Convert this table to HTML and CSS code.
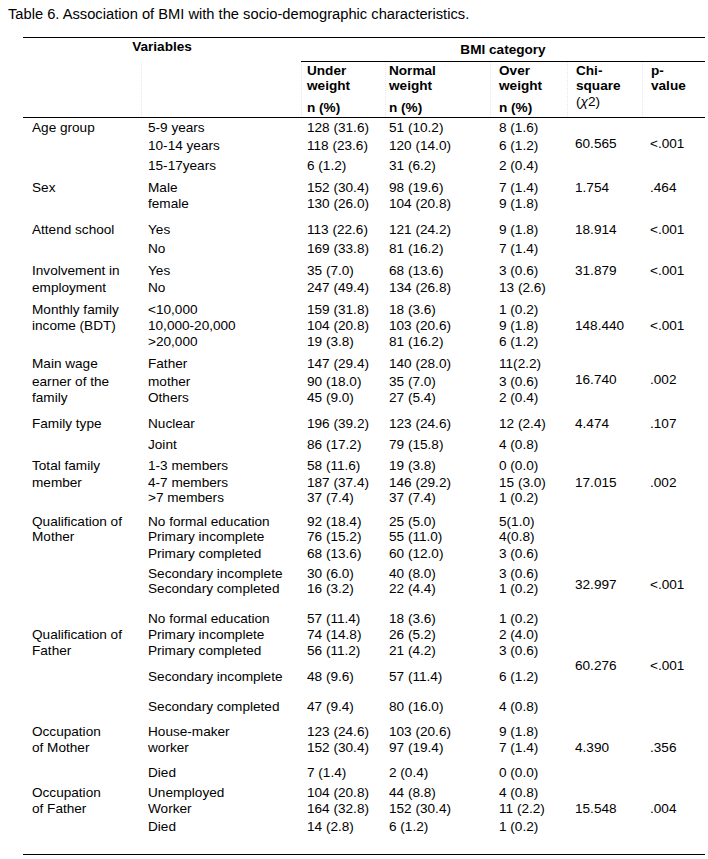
FILE: index.html
```html
<!DOCTYPE html>
<html>
<head>
<meta charset="utf-8">
<link rel="stylesheet" href="styles.css">
</head>
<body>
<div class="page">
  <p class="title">Table 6. Association of BMI with the socio-demographic characteristics.</p>
  <div class="table">
    <div class="head">
      <div class="h-var">Variables</div>
      <div class="h-bmi">BMI category</div>
      <div class="hc"></div>
      <div class="hc"></div>
      <div class="hc"><div>Under</div><div>weight</div><div class="np">n (%)</div></div>
      <div class="hc"><div>Normal</div><div>weight</div><div class="np">n (%)</div></div>
      <div class="hc"><div>Over</div><div>weight</div><div class="np">n (%)</div></div>
      <div class="hc"><div>Chi-</div><div>square</div><div class="chi">(<i>χ</i>2)</div></div>
      <div class="hc"><div>p-</div><div>value</div></div>
    </div>
    <div class="body">
      <div class="ln"><span>Age group</span><span>5-9 years</span><span>128 (31.6)</span><span>51 (10.2)</span><span>8 (1.6)</span><span></span><span></span></div>
      <div class="ln m3"><span></span><span>10-14 years</span><span>118 (23.6)</span><span>120 (14.0)</span><span>6 (1.2)</span><span class="up2">60.565</span><span class="up2">&lt;.001</span></div>
      <div class="ln m5"><span></span><span>15-17years</span><span>6 (1.2)</span><span>31 (6.2)</span><span>2 (0.4)</span><span></span><span></span></div>
      <div class="ln m7"><span>Sex</span><span>Male</span><span>152 (30.4)</span><span>98 (19.6)</span><span>7 (1.4)</span><span>1.754</span><span>.464</span></div>
      <div class="ln m1"><span></span><span>female</span><span>130 (26.0)</span><span>104 (20.8)</span><span>9 (1.8)</span><span></span><span></span></div>
      <div class="ln m11"><span>Attend school</span><span>Yes</span><span>113 (22.6)</span><span>121 (24.2)</span><span>9 (1.8)</span><span>18.914</span><span>&lt;.001</span></div>
      <div class="ln m4"><span></span><span>No</span><span>169 (33.8)</span><span>81 (16.2)</span><span>7 (1.4)</span><span></span><span></span></div>
      <div class="ln m7"><span>Involvement in</span><span>Yes</span><span>35 (7.0)</span><span>68 (13.6)</span><span>3 (0.6)</span><span>31.879</span><span>&lt;.001</span></div>
      <div class="ln m2"><span>employment</span><span>No</span><span>247 (49.4)</span><span>134 (26.8)</span><span>13 (2.6)</span><span></span><span></span></div>
      <div class="ln m7"><span>Monthly family</span><span>&lt;10,000</span><span>159 (31.8)</span><span>18 (3.6)</span><span>1 (0.2)</span><span></span><span></span></div>
      <div class="ln m1"><span>income (BDT)</span><span>10,000-20,000</span><span>104 (20.8)</span><span>103 (20.6)</span><span>9 (1.8)</span><span>148.440</span><span>&lt;.001</span></div>
      <div class="ln m1"><span></span><span>&gt;20,000</span><span>19 (3.8)</span><span>81 (16.2)</span><span>6 (1.2)</span><span></span><span></span></div>
      <div class="ln m7"><span>Main wage</span><span>Father</span><span>147 (29.4)</span><span>140 (28.0)</span><span>11(2.2)</span><span></span><span></span></div>
      <div class="ln m3"><span>earner of the</span><span>mother</span><span>90 (18.0)</span><span>35 (7.0)</span><span>3 (0.6)</span><span class="up2">16.740</span><span class="up2">.002</span></div>
      <div class="ln m1"><span>family</span><span>Others</span><span>45 (9.0)</span><span>27 (5.4)</span><span>2 (0.4)</span><span></span><span></span></div>
      <div class="ln m11"><span>Family type</span><span>Nuclear</span><span>196 (39.2)</span><span>123 (24.6)</span><span>12 (2.4)</span><span>4.474</span><span>.107</span></div>
      <div class="ln m6"><span></span><span>Joint</span><span>86 (17.2)</span><span>79 (15.8)</span><span>4 (0.8)</span><span></span><span></span></div>
      <div class="ln m6"><span>Total family</span><span>1-3 members</span><span>58 (11.6)</span><span>19 (3.8)</span><span>0 (0.0)</span><span></span><span></span></div>
      <div class="ln m2"><span>member</span><span>4-7 members</span><span>187 (37.4)</span><span>146 (29.2)</span><span>15 (3.0)</span><span>17.015</span><span>.002</span></div>
      <div class="ln"><span></span><span>&gt;7 members</span><span>37 (7.4)</span><span>37 (7.4)</span><span>1 (0.2)</span><span></span><span></span></div>
      <div class="ln m9"><span>Qualification of</span><span>No formal education</span><span>92 (18.4)</span><span>25 (5.0)</span><span>5(1.0)</span><span></span><span></span></div>
      <div class="ln"><span>Mother</span><span>Primary incomplete</span><span>76 (15.2)</span><span>55 (11.0)</span><span>4(0.8)</span><span></span><span></span></div>
      <div class="ln m2"><span></span><span>Primary completed</span><span>68 (13.6)</span><span>60 (12.0)</span><span>3 (0.6)</span><span></span><span></span></div>
      <div class="ln m5"><span></span><span>Secondary incomplete</span><span>30 (6.0)</span><span>40 (8.0)</span><span>3 (0.6)</span><span></span><span></span></div>
      <div class="ln"><span></span><span>Secondary completed</span><span>16 (3.2)</span><span>22 (4.4)</span><span>1 (0.2)</span><span class="up4">32.997</span><span class="up4">&lt;.001</span></div>
      <div class="ln m15"><span></span><span>No formal education</span><span>57 (11.4)</span><span>18 (3.6)</span><span>1 (0.2)</span><span></span><span></span></div>
      <div class="ln m1"><span>Qualification of</span><span>Primary incomplete</span><span>74 (14.8)</span><span>26 (5.2)</span><span>2 (4.0)</span><span></span><span></span></div>
      <div class="ln m1"><span>Father</span><span>Primary completed</span><span>56 (11.2)</span><span>21 (4.2)</span><span>3 (0.6)</span><span></span><span></span></div>
      <div class="ln m11"><span></span><span>Secondary incomplete</span><span>48 (9.6)</span><span>57 (11.4)</span><span>6 (1.2)</span><span class="up11">60.276</span><span class="up11">&lt;.001</span></div>
      <div class="ln m15"><span></span><span>Secondary completed</span><span>47 (9.4)</span><span>80 (16.0)</span><span>4 (0.8)</span><span></span><span></span></div>
      <div class="ln m10"><span>Occupation</span><span>House-maker</span><span>123 (24.6)</span><span>103 (20.6)</span><span>9 (1.8)</span><span></span><span></span></div>
      <div class="ln m1"><span>of Mother</span><span>worker</span><span>152 (30.4)</span><span>97 (19.4)</span><span>7 (1.4)</span><span>4.390</span><span>.356</span></div>
      <div class="ln m10"><span></span><span>Died</span><span>7 (1.4)</span><span>2 (0.4)</span><span>0 (0.0)</span><span></span><span></span></div>
      <div class="ln m5"><span>Occupation</span><span>Unemployed</span><span>104 (20.8)</span><span>44 (8.8)</span><span>4 (0.8)</span><span></span><span></span></div>
      <div class="ln m1"><span>of Father</span><span>Worker</span><span>164 (32.8)</span><span>152 (30.4)</span><span>11 (2.2)</span><span>15.548</span><span>.004</span></div>
      <div class="ln m3"><span></span><span>Died</span><span>14 (2.8)</span><span>6 (1.2)</span><span>1 (0.2)</span><span></span><span></span></div>
    </div>
  </div>
</div>
</body>
</html>
```
FILE: styles.css
```css
html, body {
  margin: 0;
  padding: 0;
  background: #fff;
}
body {
  font-family: "Liberation Sans", Arial, sans-serif;
  font-size: 13.6px;
  color: #000;
}
.page {
  padding-top: 6px;
}
.title {
  margin: 0 0 0 8px;
  font-size: 14.7px;
  line-height: 16px;
  white-space: nowrap;
}
.table {
  margin: 15px 0 0 23px;
  width: 682px;
}
.head,
.ln {
  display: grid;
  grid-template-columns: 118px 160px 84px 105px 77px 75px 63px;
}
.head {
  border-top: 1px solid #000;
  border-bottom: 1px solid #000;
  font-weight: bold;
  line-height: 15px;
}
.h-var {
  grid-column: 1 / 3;
  text-align: center;
  padding-top: 1px;
  height: 23px;
}
.h-bmi {
  grid-column: 3 / 8;
  text-align: center;
  padding-top: 4px;
  height: 19px;
  border-bottom: 1px solid #000;
}
.hc {
  padding-top: 1px;
  padding-bottom: 2px;
  border-left: 1px dotted #e8e8e8;
  height: 52px;
}
.hc:nth-child(3) {
  border-left: none;
}
.hc:nth-child(5) { padding-left: 5px; }
.hc:nth-child(6) { padding-left: 3px; }
.hc:nth-child(7) { padding-left: 8px; }
.hc:nth-child(8) { padding-left: 8px; }
.hc:nth-child(9) { padding-left: 8px; }
.np {
  margin-top: 7px;
}
.chi {
  margin-top: 1px;
  font-weight: normal;
}
.body {
  padding-top: 2px;
  padding-bottom: 20px;
  border-bottom: 1px solid #000;
  line-height: 15px;
}
.ln > span {
  white-space: nowrap;
}
.ln > span:nth-child(1) { padding-left: 9px; }
.ln > span:nth-child(2) { padding-left: 7px; }
.ln > span:nth-child(3) { padding-left: 6px; }
.ln > span:nth-child(4) { padding-left: 4px; }
.ln > span:nth-child(5) { padding-left: 9px; }
.ln > span:nth-child(6) { padding-left: 8px; }
.ln > span:nth-child(7) { padding-left: 8px; }
.m1 { margin-top: 1px; }
.m2 { margin-top: 2px; }
.m3 { margin-top: 3px; }
.m4 { margin-top: 4px; }
.m5 { margin-top: 5px; }
.m6 { margin-top: 6px; }
.m7 { margin-top: 7px; }
.m9 { margin-top: 9px; }
.m10 { margin-top: 10px; }
.m11 { margin-top: 11px; }
.m15 { margin-top: 15px; }
.up2 { margin-top: -2px; }
.up4 { margin-top: -4px; }
.up11 { margin-top: -11px; }
```
